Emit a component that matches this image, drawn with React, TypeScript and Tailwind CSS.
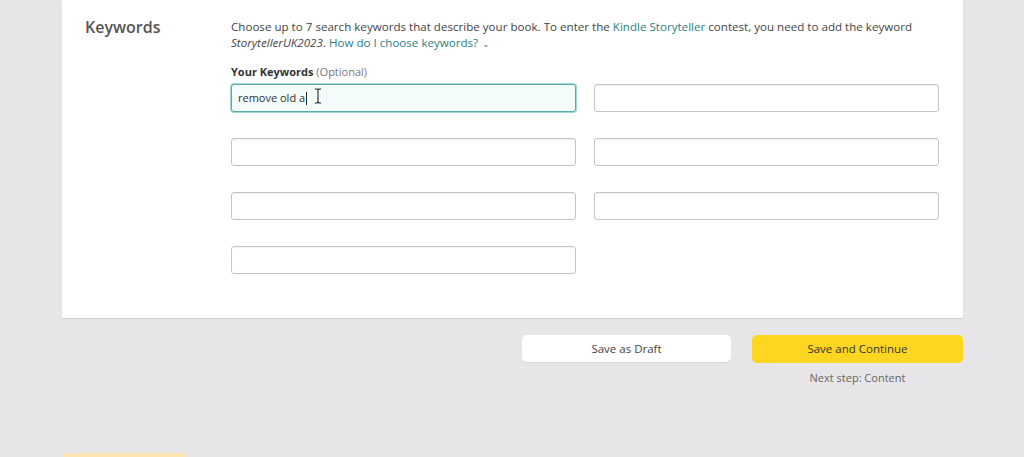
import { useState } from 'react';

const IBeam = () => (
  <svg width="8" height="16" viewBox="0 0 8 16" className="ml-[7px] -mt-[4px]">
    <path d="M1 1h2l1 1 1-1h2M4 2v12M1 15h2l1-1 1 1h2" fill="none" stroke="#222" strokeWidth="1.1" />
  </svg>
);

const KeywordInput = ({ value, focused }: { value?: string; focused?: boolean }) => (
  <div
    className={`relative h-[28px] w-[345px] rounded-[3px] border ${
      focused
        ? 'border-[#5fa8a8] bg-[#f3fbfb] shadow-[0_0_0_1px_#a6d6d6]'
        : 'border-[#c4c4c4] bg-white shadow-[inset_0_1px_1px_rgba(0,0,0,0.06)]'
    }`}
  >
    {value !== undefined && (
      <div className="flex h-full items-center pl-[6px] text-[11px] text-[#333]">
        <span>{value}</span>
        <span className="ml-px h-[13px] w-px bg-[#222]" />
        <IBeam />
      </div>
    )}
  </div>
);

export default function App() {
  const [keywords] = useState(['remove old a', '', '', '', '', '', '']);

  return (
    <div className="h-[457px] w-[1024px] overflow-hidden bg-[#e7e5e7] font-['Open_Sans',sans-serif] text-[#333]">
      <section className="ml-[62px] flex h-[318px] w-[901px] bg-white shadow-[0_1px_1px_rgba(0,0,0,0.08)]">
        <h2 className="w-[169px] pl-[23px] pt-[15px] text-[16px] font-semibold text-[#555]">Keywords</h2>
        <div className="pt-[19px]">
          <p className="w-[700px] text-[11.6px] leading-[16px] text-[#444]">
            Choose up to 7 search keywords that describe your book. To enter the{' '}
            <span className="text-[#2a7f7f]">Kindle Storyteller</span> contest, you need to add the keyword{' '}
            <i>StorytellerUK2023</i>. <span className="text-[#2a7f7f]">How do I choose keywords?</span>
            <span className="ml-[4px] text-[9px] text-[#2a7f7f]">⌄</span>
          </p>
          <label className="mt-[13px] block text-[11px] font-bold leading-[14px] text-[#333]">
            Your Keywords <span className="font-normal text-[#777]">(Optional)</span>
          </label>
          <div className="mt-[5px] grid grid-cols-[345px_345px] gap-x-[18px] gap-y-[26px]">
            {keywords.map((k, i) => (
              <KeywordInput key={i} value={i === 0 ? k : undefined} focused={i === 0} />
            ))}
          </div>
        </div>
      </section>

      <div className="ml-[522px] mt-[17px] flex gap-[21px]">
        <button className="h-[27px] w-[209px] rounded-[5px] bg-white text-[11.5px] text-[#444] shadow-[0_1px_1px_rgba(0,0,0,0.05)]">
          Save as Draft
        </button>
        <div className="flex flex-col items-center">
          <button className="h-[28px] w-[211px] rounded-[5px] bg-[#fdd622] text-[11.5px] text-[#333]">
            Save and Continue
          </button>
          <span className="mt-[7px] text-[11px] text-[#666]">Next step: Content</span>
        </div>
      </div>

      <div className="ml-[63px] mt-[66px] h-[4px] w-[122px] rounded-t-[3px] bg-[#fbe3b2]" />
    </div>
  );
}
